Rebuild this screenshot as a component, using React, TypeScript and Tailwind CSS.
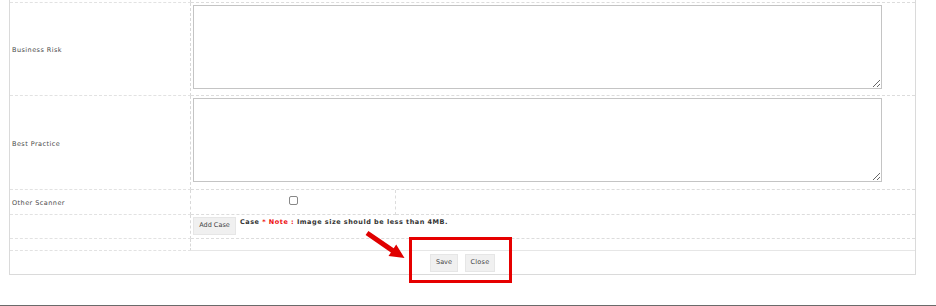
import * as React from "react";

const font = { fontFamily: '"DejaVu Sans", Verdana, sans-serif' };

function AreaRow({ label, height }: { label: string; height: string }) {
  return (
    <div className={`flex ${height}`}>
      <div className="w-[181px] flex items-center pl-[2px] pt-[4px] text-[6.5px] tracking-[0.45px] text-[#4a4a4a] border-b border-[#e2e2e2] border-r border-dashed border-r-[#d8d8d8]">
        {label}
      </div>
      <div className="flex-1 border-b border-dashed border-[#dcdcdc] pl-[2px] pt-[2px] pr-[33px]">
        <textarea className="block w-full h-[84px] border border-[#c4c4c4] bg-white resize" />
      </div>
    </div>
  );
}

export default function App() {
  return (
    <div className="relative w-[936px] h-[306px] bg-white overflow-hidden" style={font}>
      <div className="ml-[9px] w-[907px] border-x border-b border-[#dadada]">
        {/* top fragment */}
        <div className="flex h-[3px]">
          <div className="w-[181px] border-b border-[#e2e2e2] border-r border-dashed border-r-[#d8d8d8]" />
          <div className="flex-1 border-b border-dashed border-[#dcdcdc]" />
        </div>

        <AreaRow label="Business Risk" height="h-[93px]" />
        <AreaRow label="Best Practice" height="h-[94px]" />

        {/* Other Scanner */}
        <div className="flex h-[25px]">
          <div className="w-[181px] flex items-center pl-[2px] pt-[4px] text-[6.5px] tracking-[0.45px] text-[#4a4a4a] border-b border-[#e2e2e2] border-r border-dashed border-r-[#d8d8d8]">
            Other Scanner
          </div>
          <div className="w-[205px] flex justify-center pt-[6px] border-b border-dashed border-[#dcdcdc] border-r">
            <div className="w-[9px] h-[9px] border border-[#888] rounded-[2px] bg-white" />
          </div>
          <div className="flex-1 border-b border-dashed border-[#dcdcdc]" />
        </div>

        {/* Add Case */}
        <div className="flex h-[24px]">
          <div className="w-[181px] border-b border-[#e2e2e2] border-r border-dashed border-r-[#d8d8d8]" />
          <div className="flex-1 flex items-start gap-[4px] pl-[2px] pt-[2px] border-b border-dashed border-[#dcdcdc]">
            <button className="h-[18px] w-[43px] bg-[#f0f0f0] border border-[#e6e6e6] text-[6.5px] text-[#444] cursor-pointer">
              Add Case
            </button>
            <span className="text-[6.5px] font-bold tracking-[0.5px] text-[#333] leading-none pt-[2px]">
              Case <span className="text-[#ee1111]">* Note :</span> Image size should be less than 4MB.
            </span>
          </div>
        </div>

        {/* empty row */}
        <div className="flex h-[12px]">
          <div className="w-[181px] border-b border-[#e2e2e2] border-r border-dashed border-r-[#d8d8d8]" />
          <div className="flex-1 border-b border-[#e6e6e6]" />
        </div>

        {/* footer */}
        <div className="flex justify-center items-center gap-[7px] h-[23px]">
          <button className="h-[18px] w-[28px] bg-[#f0f0f0] border border-[#e6e6e6] text-[6.5px] text-[#444]">
            Save
          </button>
          <button className="h-[18px] w-[30px] bg-[#f0f0f0] border border-[#e6e6e6] text-[6.5px] tracking-[0.3px] text-[#444]">
            Close
          </button>
        </div>
      </div>

      <div className="mt-[30px] h-[2px] bg-[#6a6a6a]" />

      {/* annotation overlay */}
      <div className="absolute left-[409px] top-[237px] w-[103px] h-[46px] border-[3px] border-[#e60000]" />
      <svg className="absolute left-0 top-0" width="936" height="306" viewBox="0 0 936 306">
        <polygon
          points="365.6,235.1 368.4,230.9 393.7,248.2 396.2,244.5 404.5,258 388.5,256.1 390.9,252.4"
          fill="#e00000"
        />
      </svg>
    </div>
  );
}
